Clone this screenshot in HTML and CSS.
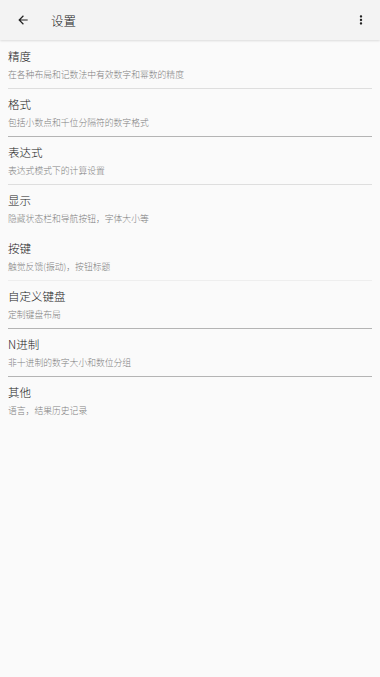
FILE: index.html
```html
<!DOCTYPE html>
<html>
  <head>
    <link rel="stylesheet" href="styles.css">
  </head>
  <body>
    <div class="toolbar">
      <svg class="back-icon" viewBox="0 0 24 24" width="14" height="14">
        <path d="M20 11H7.83l5.59-5.59L12 4l-8 8 8 8 1.41-1.41L7.83 13H20v-2z" fill="#222"/>
      </svg>
      <div class="title">设置</div>
      <svg class="more-icon" viewBox="0 0 24 24" width="14" height="14">
        <path d="M12 8c1.1 0 2-.9 2-2s-.9-2-2-2-2 .9-2 2 .9 2 2 2zm0 2c-1.1 0-2 .9-2 2s.9 2 2 2 2-.9 2-2-.9-2-2-2zm0 6c-1.1 0-2 .9-2 2s.9 2 2 2 2-.9 2-2-.9-2-2-2z" fill="#222"/>
      </svg>
    </div>
    <div class="list">
      <div class="item line-light">
        <div class="item-title">精度</div>
        <div class="item-sub">在各种布局和记数法中有效数字和幂数的精度</div>
      </div>
      <div class="item line-dark">
        <div class="item-title">格式</div>
        <div class="item-sub">包括小数点和千位分隔符的数字格式</div>
      </div>
      <div class="item line-light">
        <div class="item-title">表达式</div>
        <div class="item-sub">表达式模式下的计算设置</div>
      </div>
      <div class="item line-none">
        <div class="item-title">显示</div>
        <div class="item-sub">隐藏状态栏和导航按钮，字体大小等</div>
      </div>
      <div class="item line-faint">
        <div class="item-title">按键</div>
        <div class="item-sub">触觉反馈(振动)，按钮标题</div>
      </div>
      <div class="item line-dark">
        <div class="item-title">自定义键盘</div>
        <div class="item-sub">定制键盘布局</div>
      </div>
      <div class="item line-dark">
        <div class="item-title">N进制</div>
        <div class="item-sub">非十进制的数字大小和数位分组</div>
      </div>
      <div class="item line-none">
        <div class="item-title">其他</div>
        <div class="item-sub">语言，结果历史记录</div>
      </div>
    </div>
  </body>
</html>
```

FILE: styles.css
```css
body {
    margin: 0;
    background-color: #fafafa;
    font-family: "Noto Sans CJK SC", "Noto Sans", Roboto, sans-serif;
    font-weight: 300;
    color: #222;
}
.toolbar {
    display: flex;
    align-items: center;
    height: 40px;
    background-color: #f3f3f3;
    box-shadow: 0 1px 2px rgba(0, 0, 0, 0.12);
    position: relative;
}
.back-icon {
    margin-left: 16px;
}
.title {
    margin-left: 21px;
    font-size: 12.5px;
    flex: 1;
}
.more-icon {
    margin-right: 12px;
}
.list {
    padding: 1px 8px 0 8px;
}
.item {
    height: 47px;
    border-bottom: 1px solid transparent;
    box-sizing: content-box;
}
.line-light {
    border-bottom-color: #dedede;
}
.line-dark {
    border-bottom-color: #b4b4b4;
}
.line-faint {
    border-bottom-color: #eeeeee;
}
.item-title {
    padding-top: 8px;
    font-size: 11.5px;
    line-height: 14px;
    color: #222;
}
.item-sub {
    margin-top: 6px;
    font-size: 8.8px;
    line-height: 12px;
    color: #808080;
}
```
